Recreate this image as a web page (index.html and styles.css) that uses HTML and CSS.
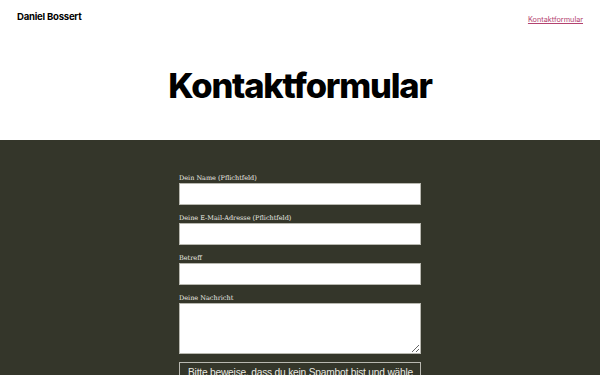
FILE: index.html
```html
<!DOCTYPE html>
<html lang="de">
<head>
<meta charset="utf-8">
<title>Kontaktformular – Daniel Bossert</title>
<link rel="stylesheet" href="styles.css">
</head>
<body>
<header class="site-header">
  <a class="site-title" href="#">Daniel Bossert</a>
  <nav class="site-nav"><a href="#">Kontaktformular</a></nav>
</header>
<div class="hero">
  <h1 class="page-title">Kontaktformular</h1>
</div>
<main class="content">
  <form class="contact-form">
    <label class="field">
      <span class="label">Dein Name (Pflichtfeld)</span>
      <input type="text">
    </label>
    <label class="field">
      <span class="label">Deine E-Mail-Adresse (Pflichtfeld)</span>
      <input type="email">
    </label>
    <label class="field">
      <span class="label">Betreff</span>
      <input type="text">
    </label>
    <label class="field">
      <span class="label">Deine Nachricht</span>
      <textarea></textarea>
    </label>
    <fieldset class="captcha">
      <p><span class="line">Bitte beweise, dass du kein Spambot bist und wähle</span> das Symbol</p>
    </fieldset>
  </form>
</main>
</body>
</html>
```
FILE: styles.css
```css
html, body {
  margin: 0;
  padding: 0;
}
body {
  background: #ffffff;
  font-family: Inter, "Liberation Sans", sans-serif;
  color: #000;
}
.site-header {
  display: flex;
  justify-content: space-between;
  align-items: center;
  padding: 10px 17px 0 17px;
  height: 12px;
}
.site-title {
  font-size: 9.6px;
  font-weight: 700;
  color: #000;
  text-decoration: none;
  letter-spacing: -0.25px;
}
.site-nav a {
  font-size: 7.3px;
  color: #b3426f;
  text-decoration: underline;
}
.hero {
  display: flex;
  justify-content: center;
  padding-top: 47px;
  box-sizing: border-box;
  height: 118px;
}
.page-title {
  margin: 0;
  font-size: 34.5px;
  font-weight: 800;
  letter-spacing: -1.2px;
  line-height: 1;
}
.content {
  background: #34362a;
  padding-top: 33px;
  min-height: 300px;
}
.contact-form {
  width: 242px;
  margin: 0 auto;
  display: flex;
  flex-direction: column;
}
.field {
  display: flex;
  flex-direction: column;
  margin-bottom: 8px;
}
.label {
  font-family: "DejaVu Serif", "Liberation Serif", serif;
  font-size: 6.5px;
  color: #ecece4;
  line-height: 10px;
}
.field input, .field textarea {
  box-sizing: border-box;
  width: 100%;
  height: 22px;
  border: 1px solid #b8b8b0;
  background: #fff;
  margin: 0;
  padding: 0;
}
.field textarea {
  height: 51px;
  resize: vertical;
}
.captcha {
  margin: 0;
  min-width: 0;
  border: 1px solid #b8b8b0;
  padding: 2px 8px 4px;
}
.captcha p {
  margin: 0;
  font-family: "Liberation Sans", Arial, sans-serif;
  font-size: 10.2px;
  letter-spacing: -0.2px;
  line-height: 16px;
  color: #eaeae2;
}
.captcha .line {
  white-space: nowrap;
}
```
